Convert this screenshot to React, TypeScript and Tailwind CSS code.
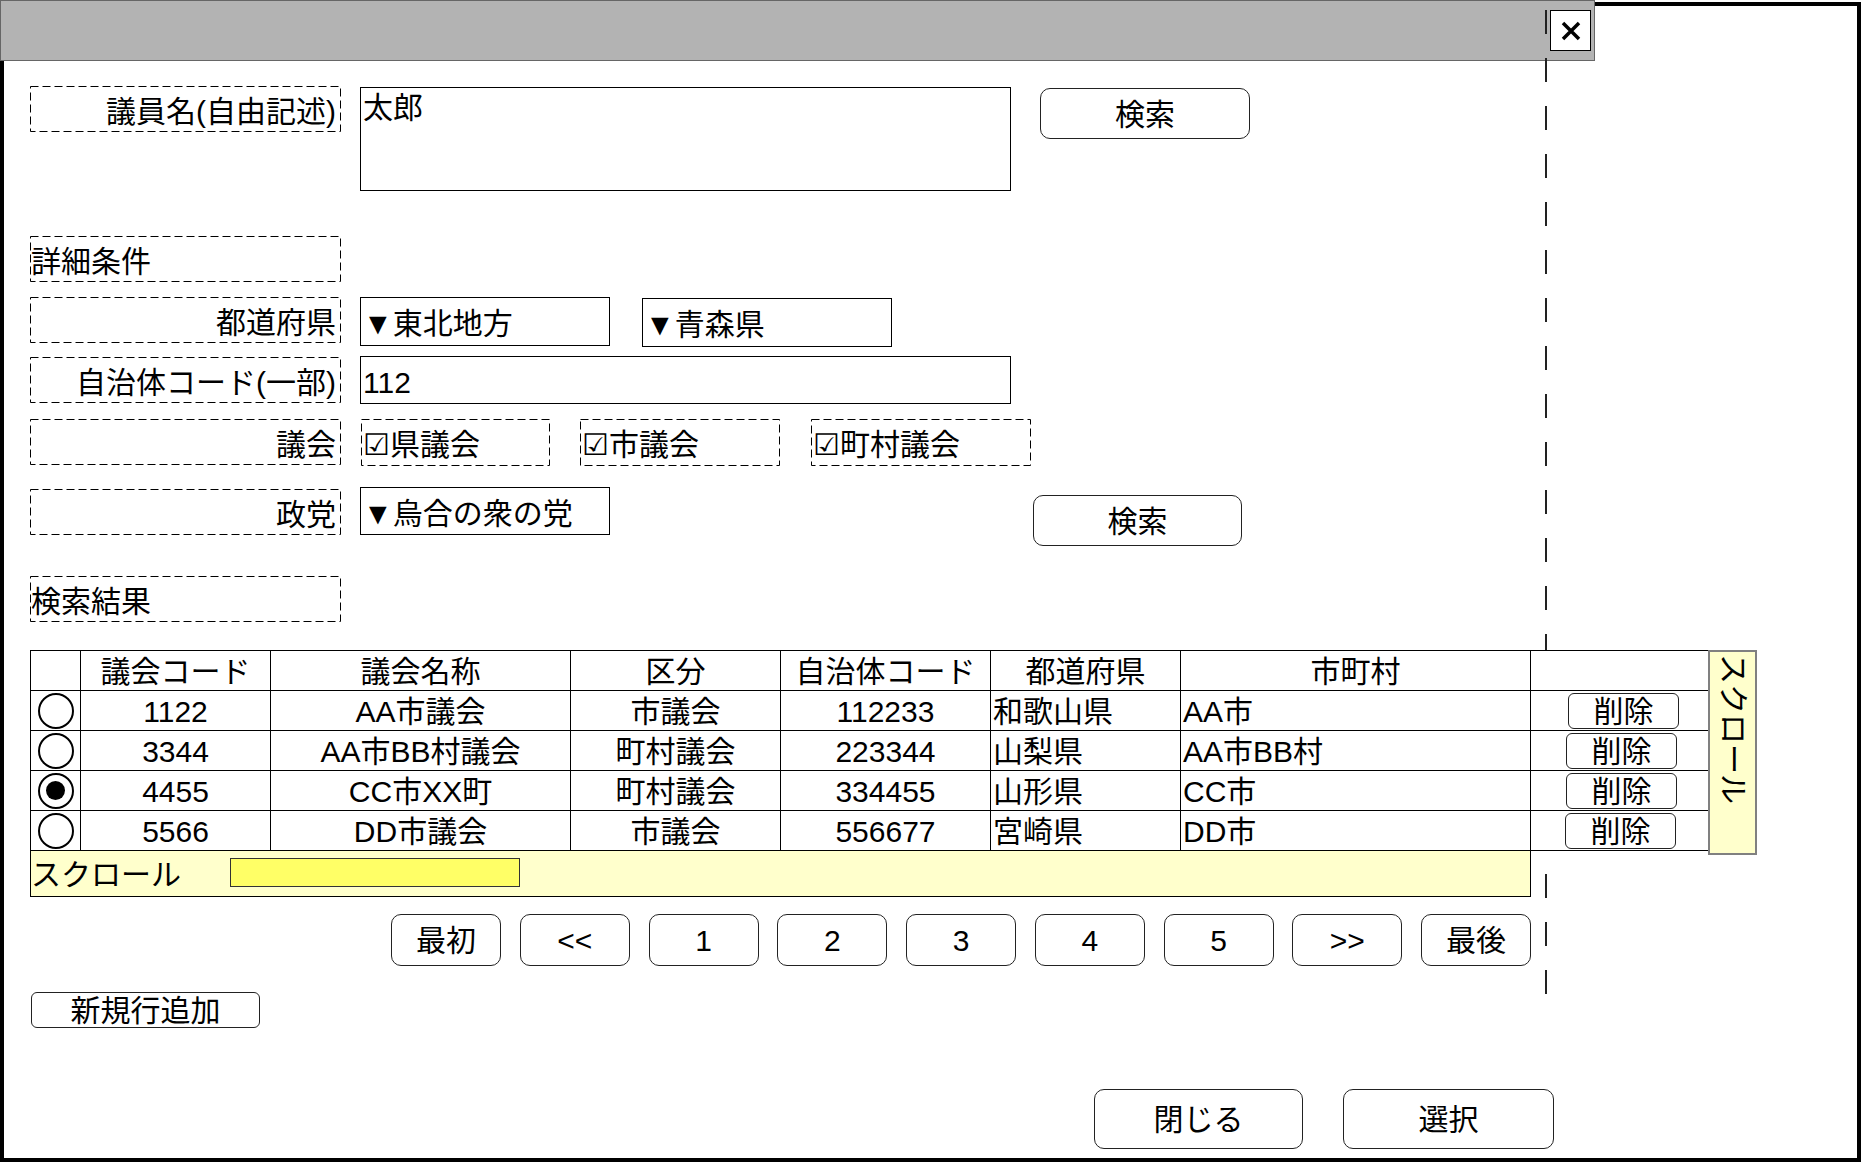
import type { ReactNode } from "react";

type BoxProps = { className?: string; children?: ReactNode };

// dashed wireframe box (8px dash / 4px gap like the mock)
const DashedBox = ({ className = "", children }: BoxProps) => (
  <div className={`relative flex items-center pt-[5px] ${className}`}>
    <svg className="pointer-events-none absolute left-0 top-0 h-[calc(100%-1px)] w-[calc(100%-1px)] overflow-visible">
      <rect x="0.5" y="0.5" width="100%" height="100%" fill="none" stroke="#000" strokeDasharray="8 4" />
    </svg>
    {children}
  </div>
);

const Label = ({ className = "", children }: BoxProps) => (
  <DashedBox className={`h-[46px] w-[311px] shrink-0 justify-end pr-[5px] ${className}`}>
    <span className="whitespace-nowrap">{children}</span>
  </DashedBox>
);

const Field = ({ className = "", children }: BoxProps) => (
  <div className={`flex shrink-0 items-center border border-black bg-white pl-[2px] pt-[5px] whitespace-nowrap ${className}`}>
    {children}
  </div>
);

const Btn = ({ className = "", children }: BoxProps) => (
  <button className={`flex shrink-0 items-center justify-center border border-[#222] bg-white pt-[2px] whitespace-nowrap ${className}`}>
    {children}
  </button>
);

const Radio = ({ checked }: { checked: boolean }) => (
  <div className="flex h-[36px] w-[36px] items-center justify-center rounded-full border-2 border-black bg-white">
    {checked && <div className="h-[19px] w-[19px] rounded-full bg-black" />}
  </div>
);

const rows = [
  { sel: false, code: "1122", name: "AA市議会", kubun: "市議会", jcode: "112233", pref: "和歌山県", city: "AA市", off: "ml-[37px]" },
  { sel: false, code: "3344", name: "AA市BB村議会", kubun: "町村議会", jcode: "223344", pref: "山梨県", city: "AA市BB村", off: "ml-[35px]" },
  { sel: true, code: "4455", name: "CC市XX町", kubun: "町村議会", jcode: "334455", pref: "山形県", city: "CC市", off: "ml-[35px]" },
  { sel: false, code: "5566", name: "DD市議会", kubun: "市議会", jcode: "556677", pref: "宮崎県", city: "DD市", off: "ml-[34px]" },
];

const pages = ["最初", "<<", "1", "2", "3", "4", "5", ">>", "最後"];

const cell = "flex shrink-0 items-center border-r border-black bg-white pt-[2px] whitespace-nowrap";

export default function App() {
  return (
    <div className="h-[1162px] w-[1863px] overflow-hidden bg-white pt-[2px] text-[30px] leading-[36px] text-black font-['Liberation_Sans','Noto_Sans_CJK_JP',sans-serif]">
      <div className="relative h-[1160px] w-[1861px] border-4 border-black">
        {/* title bar */}
        <div className="-ml-[4px] -mt-[6px] flex h-[61px] w-[1595px] justify-end border border-[#666] bg-[#b3b3b3] pr-[3px] pt-[9px]">
          <div className="flex h-[41px] w-[41px] items-center justify-center border border-black bg-white">
            <svg width="20" height="20" viewBox="0 0 20 20">
              <path d="M2 2 L18 18 M18 2 L2 18" stroke="#000" strokeWidth="3.5" />
            </svg>
          </div>
        </div>

        {/* dashed guide line */}
        <svg className="pointer-events-none absolute left-[1541px] top-[4px] z-10" width="2" height="984">
          <line x1="1" y1="0" x2="1" y2="984" stroke="#222" strokeWidth="2" strokeDasharray="24 24" />
        </svg>

        <div className="pl-[26px]">
          {/* 議員名 */}
          <div className="mt-[25px] flex h-[105px] items-start">
            <Label>議員名(自由記述)</Label>
            <div className="ml-[19px] mt-[1px] h-[104px] w-[651px] shrink-0 border border-black pl-[2px] pt-[2px]">太郎</div>
            <Btn className="ml-[29px] mt-[2px] h-[51px] w-[210px] rounded-[10px]">検索</Btn>
          </div>

          <DashedBox className="mt-[45px] h-[46px] w-[311px] pl-[1px]">詳細条件</DashedBox>

          <div className="mt-[15px] flex h-[50px] items-start">
            <Label>都道府県</Label>
            <Field className="ml-[19px] h-[49px] w-[250px]">▼東北地方</Field>
            <Field className="ml-[32px] mt-[1px] h-[49px] w-[250px]">▼青森県</Field>
          </div>

          <div className="mt-[9px] flex h-[48px] items-start">
            <Label className="mt-[1px]">自治体コード(一部)</Label>
            <Field className="ml-[19px] h-[48px] w-[651px]">112</Field>
          </div>

          <div className="mt-[15px] flex h-[47px] items-start">
            <Label>議会</Label>
            <DashedBox className="ml-[20px] h-[47px] w-[189px] pl-[2px]">☑県議会</DashedBox>
            <DashedBox className="ml-[30px] h-[47px] w-[200px] pl-[2px]">☑市議会</DashedBox>
            <DashedBox className="ml-[31px] h-[47px] w-[220px] pl-[2px]">☑町村議会</DashedBox>
          </div>

          <div className="mt-[21px] flex h-[59px] items-start">
            <Label className="mt-[2px]">政党</Label>
            <Field className="ml-[19px] h-[48px] w-[250px]">▼烏合の衆の党</Field>
            <Btn className="ml-[423px] mt-[8px] h-[51px] w-[209px] rounded-[10px]">検索</Btn>
          </div>

          <DashedBox className="mt-[30px] h-[46px] w-[311px] pl-[1px]">検索結果</DashedBox>

          {/* result table */}
          <div className="relative z-20 mt-[28px] flex items-start">
            <div className="w-[1678px]">
              <div className="flex h-[41px] border-b border-t border-black">
                <div className={`${cell} w-[51px] border-l`} />
                <div className={`${cell} w-[190px] justify-center`}>議会コード</div>
                <div className={`${cell} w-[300px] justify-center`}>議会名称</div>
                <div className={`${cell} w-[210px] justify-center`}>区分</div>
                <div className={`${cell} w-[210px] justify-center`}>自治体コード</div>
                <div className={`${cell} w-[190px] justify-center`}>都道府県</div>
                <div className={`${cell} w-[350px] justify-center`}>市町村</div>
                <div className="w-[177px] shrink-0 bg-white" />
              </div>
              {rows.map((r) => (
                <div key={r.code} className="flex h-[40px] border-b border-black">
                  <div className="flex w-[51px] shrink-0 items-center justify-center border-l border-r border-black bg-white">
                    <Radio checked={r.sel} />
                  </div>
                  <div className={`${cell} w-[190px] justify-center`}>{r.code}</div>
                  <div className={`${cell} w-[300px] justify-center`}>{r.name}</div>
                  <div className={`${cell} w-[210px] justify-center`}>{r.kubun}</div>
                  <div className={`${cell} w-[210px] justify-center`}>{r.jcode}</div>
                  <div className={`${cell} w-[190px] pl-[2px]`}>{r.pref}</div>
                  <div className={`${cell} w-[350px] pl-[2px]`}>{r.city}</div>
                  <div className="flex w-[177px] shrink-0 items-center bg-white">
                    <Btn className={`${r.off} h-[36px] w-[111px] rounded-[6px]`}>削除</Btn>
                  </div>
                </div>
              ))}
              {/* horizontal scroll */}
              <div className="flex h-[46px] w-[1501px] items-center border-b border-l border-r border-black bg-[#ffffcc]">
                <span className="w-[199px] shrink-0 pt-[3px] whitespace-nowrap">スクロール</span>
                <div className="mt-[-3px] h-[29px] w-[290px] border border-[#333] bg-[#ffff66]" />
              </div>
            </div>
            {/* vertical scroll */}
            <div className="flex h-[205px] w-[49px] shrink-0 items-center border-2 border-[#808080] bg-[#ffffcc] pt-[2px] [text-orientation:sideways] [writing-mode:vertical-rl]">
              スクロール
            </div>
          </div>

          {/* paging */}
          <div className="ml-[361px] mt-[17px] flex h-[52px] gap-[18.75px]">
            {pages.map((p) => (
              <Btn key={p} className="h-[52px] w-[110px] rounded-[10px]">
                {p}
              </Btn>
            ))}
          </div>

          <Btn className="ml-[1px] mt-[26px] h-[36px] w-[229px] rounded-[6px]">新規行追加</Btn>

          <div className="ml-[1064px] mt-[61px] flex gap-[40px]">
            <Btn className="h-[60px] w-[209px] rounded-[10px]">閉じる</Btn>
            <Btn className="h-[60px] w-[211px] rounded-[10px]">選択</Btn>
          </div>
        </div>
      </div>
    </div>
  );
}
